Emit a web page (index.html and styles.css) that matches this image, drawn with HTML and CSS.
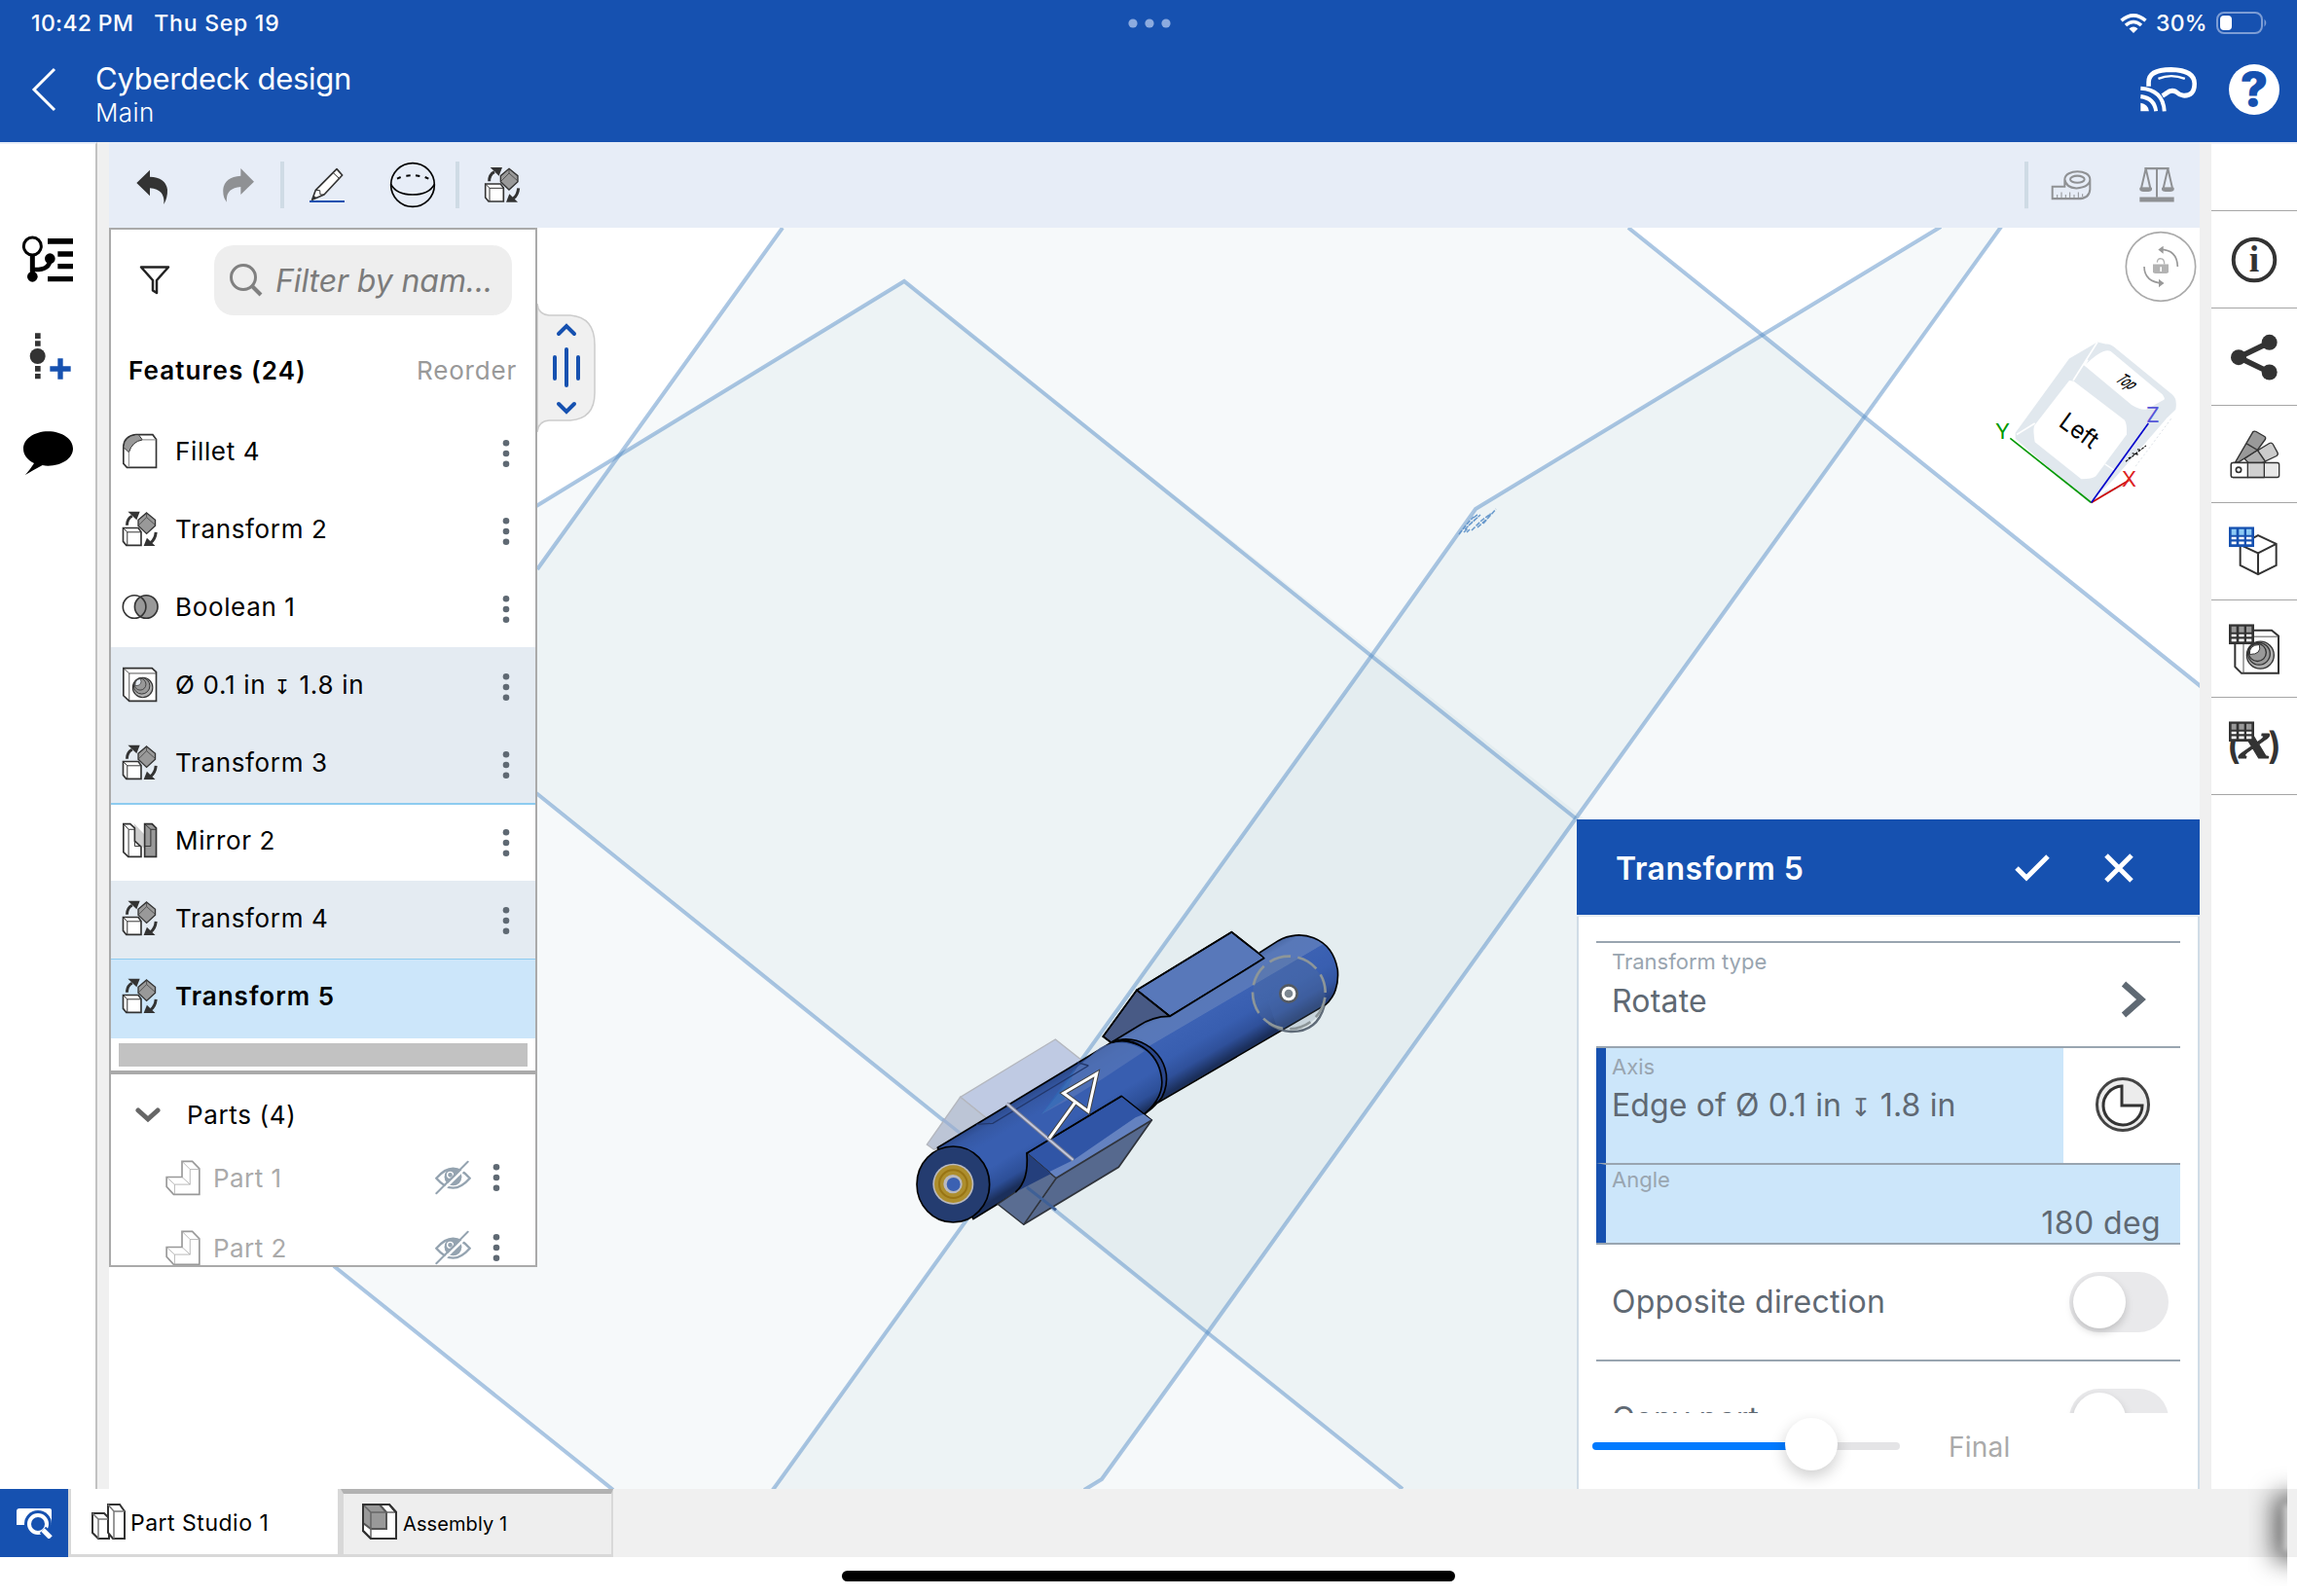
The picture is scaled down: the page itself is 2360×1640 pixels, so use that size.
FILE: index.html
```html
<!DOCTYPE html>
<html lang="en">
<head>
<meta charset="utf-8">
<title>Cyberdeck design</title>
<link rel="stylesheet" href="styles.css">
</head>
<body>
<svg class="defs" aria-hidden="true">
  <defs>
    <symbol id="transform" viewBox="76 280 114 112">
      <path d="M92 325Q92 304 108 296" fill="none" stroke="#333" stroke-width="9"/>
      <path d="M95 282H132L122 308Z" fill="#333"/>
      <path d="M182 346Q180 368 166 378" fill="none" stroke="#333" stroke-width="9"/>
      <path d="M180 389H144L154 364Z" fill="#333"/>
      <path d="M153 286L180 308V326L153 351L127 326V308Z" fill="#999" stroke="#333" stroke-width="4"/>
      <path d="M127 326L153 300L180 324M153 286V300" fill="none" stroke="#444" stroke-width="2.5"/>
      <path d="M80 333H127L136 345V387H90L80 375Z" fill="#fff" stroke="#333" stroke-width="5"/>
      <path d="M80 333L93 346V387M93 346H136" fill="none" stroke="#333" stroke-width="3"/>
    </symbol>
    <symbol id="fillet" viewBox="76 40 114 112">
      <path d="M120 45H172L183 60V147H92L81 135V85Q81 50 120 45Z" fill="#fff" stroke="#333" stroke-width="5"/>
      <path d="M120 45H128L140 61Q108 66 98 100L81 84Q84 50 120 45Z" fill="#999" stroke="#333" stroke-width="3"/>
      <path d="M98 100V145M140 61H182" stroke="#999" stroke-width="4" fill="none"/>
    </symbol>
    <symbol id="boolean" viewBox="74 536 116 80">
      <circle cx="151" cy="576" r="36" fill="#999"/>
      <circle cx="114" cy="576" r="36" fill="none" stroke="#333" stroke-width="5"/>
      <circle cx="151" cy="576" r="36" fill="none" stroke="#333" stroke-width="5"/>
    </symbol>
    <symbol id="hole" viewBox="76 760 114 112">
      <path d="M81 765H170L183 777V867H99L81 850Z" fill="#fff" stroke="#333" stroke-width="5"/>
      <path d="M81 765L99 781V867M99 781H183" fill="none" stroke="#333" stroke-width="2.5"/>
      <circle cx="141" cy="825" r="31" fill="#b0b0b0" stroke="#333" stroke-width="3.5"/>
      <circle cx="138" cy="820" r="25" fill="#999" stroke="#333" stroke-width="3"/>
      <circle cx="133" cy="815" r="18" fill="#999" stroke="#333" stroke-width="2.5"/>
      <path d="M118 820Q116 800 134 798Q142 818 118 820Z" fill="#e5ebf2" stroke="#333" stroke-width="2"/>
    </symbol>
    <symbol id="mirror" viewBox="76 1240 114 112">
      <path d="M114 1244L145 1276V1320L114 1295Z" fill="#ccc"/>
      <path d="M81 1245H102L116 1258V1298L136 1316V1347H96L81 1333Z" fill="#fff" stroke="#333" stroke-width="5"/>
      <path d="M81 1245L97 1262V1347M97 1262H116M116 1298V1314H136" stroke="#333" stroke-width="3" fill="none"/>
      <path d="M147 1245H170L183 1258V1347H147V1314Z" fill="#999" stroke="#333" stroke-width="5"/>
      <path d="M147 1245L166 1262V1314H147M166 1262H183" stroke="#333" stroke-width="3" fill="none"/>
    </symbol>
    <symbol id="part" viewBox="208 994 112 112">
      <path d="M261 998H293L315 1021V1101H235L213 1077V1047H261Z" fill="#fff" stroke="#999" stroke-width="5"/>
      <path d="M261 998L286 1023V1070H238V1101M286 1023H315M213 1047L238 1070M261 1047L286 1070" fill="none" stroke="#aaa" stroke-width="2.5"/>
    </symbol>
    <symbol id="hidden" viewBox="1042 996 112 108">
      <path d="M1046 1052Q1098 992 1150 1052Q1098 1112 1046 1052Z" fill="none" stroke="#94a3b0" stroke-width="7"/>
      <circle cx="1098" cy="1048" r="27" fill="#94a3b0"/>
      <circle cx="1089" cy="1042" r="9" fill="none" stroke="#fff" stroke-width="4"/>
      <path d="M1052 1103L1152 1005" stroke="#fff" stroke-width="8"/>
      <path d="M1046 1099L1144 1001" stroke="#94a3b0" stroke-width="6" stroke-linecap="round"/>
    </symbol>
    <symbol id="dots" viewBox="0 0 8 30">
      <circle cx="4" cy="4.3" r="3.3"/><circle cx="4" cy="15" r="3.3"/><circle cx="4" cy="25.7" r="3.3"/>
    </symbol>
    <symbol id="table" viewBox="270 712 78 63">
      <path d="M270 712H348V775H270Z"/>
      <path d="M278 720H293V738H278ZM301 720H317V738H301ZM324 720H340V738H324Z" class="table-head"/>
      <path d="M278 744H293V751H278ZM301 744H317V751H301ZM324 744H340V751H324ZM278 758H293V766H278ZM301 758H317V766H301ZM324 758H340V766H324Z" fill="#fff"/>
    </symbol>
    <linearGradient id="rear" gradientUnits="userSpaceOnUse" x1="890" y1="285" x2="1006" y2="483">
      <stop offset="0" stop-color="#4d6ca9"/><stop offset=".08" stop-color="#5878b8"/><stop offset=".32" stop-color="#5878ba"/>
      <stop offset=".33" stop-color="#3c62b4"/><stop offset=".6" stop-color="#385eb0"/><stop offset=".82" stop-color="#2f509a"/><stop offset="1" stop-color="#1b2f5b"/>
    </linearGradient>
    <linearGradient id="front" gradientUnits="userSpaceOnUse" x1="400" y1="585" x2="516" y2="783">
      <stop offset="0" stop-color="#2c4a8c"/><stop offset=".12" stop-color="#3558a4"/><stop offset=".3" stop-color="#385eb0"/>
      <stop offset=".6" stop-color="#385eb0"/><stop offset=".85" stop-color="#2d4f98"/><stop offset="1" stop-color="#1b2f5b"/>
    </linearGradient>
  </defs>
</svg>

<header class="header">
  <div class="status">
    <div class="status-left"><span class="time">10:42 PM</span><span class="date">Thu Sep 19</span></div>
    <svg class="multitask" viewBox="0 0 44 12"><circle cx="5" cy="6" r="4.6"/><circle cx="22" cy="6" r="4.6"/><circle cx="39" cy="6" r="4.6"/></svg>
    <div class="status-right">
      <svg width="28" height="20" viewBox="0 0 28 20" fill="none" stroke="#fff" stroke-width="3.6"><path d="M1.5 7.2Q14-3.400 26.500 7.200"/><path d="M6 12Q14 5 22 12"/><path d="M9.500 15.500Q14 11.500 18.500 15.500L14 20Z" fill="#fff" stroke="none"/></svg>
      <span class="charge">30%</span>
      <svg width="53" height="24" viewBox="0 0 53 24"><rect x="1" y="1" width="46" height="21" rx="7" fill="none" stroke="#7d9dd5" stroke-width="2"/><rect x="4" y="4" width="12" height="15" rx="4" fill="#fff"/><path d="M49.500 7.500Q53 11.500 49.500 15.500Z" fill="#7d9dd5"/></svg>
    </div>
  </div>
  <div class="titlebar">
    <svg class="back" width="26" height="46" viewBox="0 0 26 46"><path d="M24 2L3 23L24 44" fill="none" stroke="#fff" stroke-width="3"/></svg>
    <div class="titles"><div class="doc-title">Cyberdeck design</div><div class="doc-branch">Main</div></div>
    <svg class="headset" viewBox="716 192 176 131" preserveAspectRatio="none" fill="none" stroke="#fff">
      <path d="M742 248V236Q742 199 812 199Q885 201 885 240Q885 277 850 275Q837 273 827 264Q812 256 798 268L785 276" stroke-width="14"/>
      <path d="M772 226Q812 210 855 226" stroke-width="7"/>
      <path d="M717 254Q787 258 791 321M717 278Q760 283 765 321" stroke-width="12"/><path d="M717 297Q740 300 743 321H717Z" fill="#fff" stroke="none"/>
    </svg>
    <div class="help">?</div>
  </div>
</header>

<main class="workspace">
  <nav class="rail-left">
    <svg viewBox="0 0 300 210"><g fill="none" stroke="#000"><circle cx="100" cy="69" r="27" stroke-width="9"/><path d="M100 98V160" stroke-width="15"/><path d="M104 141Q155 143 154 108" stroke-width="14"/></g><circle cx="100" cy="163" r="16"/><circle cx="154" cy="107" r="16"/><path d="M147 45H225V62H147ZM178 85H225V101H178ZM178 123H225V139H178ZM147 162H225V178H147Z"/></svg>
    <svg viewBox="0 300 300 210"><path d="M108 337H125V354H108ZM108 361H125V377H108ZM108 438H125V455H108ZM108 462H125V478H108Z" fill="#333"/><circle cx="116" cy="408" r="24" fill="#333"/><path d="M154 447H218M186 415V479" stroke="#1651b0" stroke-width="16"/></svg>
    <svg viewBox="0 600 300 210"><path d="M148 640C192 640 225 664 225 693S192 746 148 746C142 746 136 745 131 744Q108 756 78 774Q94 756 105 738C85 728 72 713 72 693C72 664 105 640 148 640Z"/></svg>
  </nav>
  <div class="gutter"></div>
  <section class="stage">
    <div class="toolbar">
      <svg viewBox="0 0 1290 240" class="tools" fill="none">
        <path d="M61 114L102 74V95Q150 96 156 134Q157 158 145 180Q150 134 102 130V154Z" fill="#333"/>
        <path d="M423 110L382 69V92Q332 96 328 133Q326 158 339 173Q334 130 382 126V150Z" fill="#8f9194"/>
        <path d="M504 48H516V192H504ZM1044 48H1056V192H1044Z" fill="#cfdbe5"/>
        <path d="M678 71L695 90L639 150L602 166L613 136Z" fill="#fff" stroke="#333" stroke-width="5" stroke-linejoin="round"/>
        <path d="M613 136L626 137L627 150L639 150M666 82L685 100" stroke="#333" stroke-width="3"/><path d="M602 166L607 152L616 160Z" fill="#333"/>
        <path d="M594 171H702" stroke="#1651b0" stroke-width="6"/>
        <circle cx="912" cy="120" r="67" stroke="#000" stroke-width="5"/><path d="M845 118Q862 150 912 150T979 118" stroke="#000" stroke-width="5"/>
        <path d="M864 101L875 96M892 92L905 91M921 91L934 93M950 96L961 101" stroke="#000" stroke-width="6"/>
        <use href="#transform" x="1132" y="64" width="114" height="112"/>
      </svg>
      <svg viewBox="360 448 480 160" preserveAspectRatio="none" class="measures" fill="none" stroke="#8f9194" stroke-width="5">
        <path d="M360 465H372V600H360Z" fill="#cfdbe5" stroke="none"/>
        <path d="M446 537H484V516C486 486 561 486 562 516V545Q560 572 525 572H446ZM484 516Q488 540 520 542Q562 538 562 516" stroke-width="6"/><ellipse cx="523" cy="516" rx="22" ry="10" stroke-width="6"/>
        <path d="M461 572V560M474 572V553M487 572V560M500 572V553M513 572V560M526 572V553M539 566V558" stroke-width="3"/>
        <path d="M730 485H806M768 485V568M734 485L720 542H748L734 485M802 485L788 542H816L802 485" stroke-width="6"/><path d="M715 540H753V547Q750 552 742 552H726Q718 552 715 547ZM783 540H821V547Q818 552 810 552H794Q786 552 783 547ZM715 567H821V581H715Z" fill="#8f9194" stroke="none"/>
      </svg>
    </div>
    <div class="canvas">
      <svg class="scene" viewBox="112 234 2148 1296">
        <g class="planes">
          <path d="M804 234L340 880L112 1200L552 815L1240 1370L1441 1530H2260V706L1673 234Z"/>
          <path d="M929 289L552 519L112 780V1120L345 1303L629 1530H2260V1341Z"/>
          <path d="M1516 523L1811 344L1994 234H2056L1619 841L1241 1369L1132 1520L1114 1530H794L1409 674Z"/>
          <g class="edges">
            <path d="M804 234L552 585M551 815L1240 1369L1441 1530M1673 234L2262 706"/>
            <path d="M551 520L929 289L1409 674L1619 841M343 1301L630 1531"/>
            <path d="M794 1531L1409 674L1516 523L1811 344L1994 233M2056 233L1619 841L1241 1369L1132 1520L1114 1531"/>
          </g>
          <path class="plane-label" d="M1499 549l7-9 8-9M1505 544l8-8 6-5M1509 540l12-11M1512 545l10-10 8-6M1518 542l10-9M1524 538l6-7 7-8M1529 532l3-5M1507 547l3-3M1514 532l5-4M1504 547l4-4"/>
        </g>
        <g class="model" transform="translate(920 930) scale(.33333)">
          <path d="M493 414L595 495L300 673L200 592Z" fill="#bfcae3" stroke="#b4b7be" stroke-width="4"/>
          <path d="M200 592L300 673L150 750L118 753L97 738Z" fill="#bcc5d6" stroke="#b4b7be" stroke-width="4"/>
          <path d="M145 660L200 704" stroke="#9fb4d3" stroke-width="10"/>
          <path d="M1036 83L1138 163L846 343L744 262Z" fill="#5878ba"/>
          <path d="M744 262L846 343L665 424L640 405Z" fill="#485a85"/>
          <path d="M1138 163L1036 83L744 262L640 405L665 424M744 262L846 343" fill="none"/>
          <path d="M665 424L750 372Q795 342 846 343L1138 163L1122 147L1180 110C1245 72 1345 95 1363 200Q1369 270 1325 308L800 612Z" fill="url(#rear)" stroke="none"/>
          <path d="M1310 125Q1368 170 1363 230Q1355 290 1310 318L1180 390L1150 300L1200 192Z" fill="#3b61b2" stroke="none" opacity=".35"/>
          <path d="M665 424L750 372Q795 342 846 343L1138 163M1122 147L1180 110C1245 72 1345 95 1363 200Q1369 270 1325 308L800 614" fill="none"/>
          <path d="M130 748L665 424C740 400 840 470 830 560Q820 610 770 642L240 968Z" fill="url(#front)"/>
          <path d="M630 440Q700 405 768 450L640 535L550 590L450 645Q500 590 560 500Z" fill="#5676b8" stroke="none" opacity=".75"/>
          <path d="M555 500L450 645L520 600Z" fill="#2f6ab8" stroke="none" opacity=".6"/>
          <path d="M665 424C745 385 850 460 834 555Q826 600 800 614L770 642Q830 590 820 530C808 450 730 400 665 424Z" fill="#2a468a"/>
          <path d="M595 495L300 673L250 676M560 485L595 495" fill="none" stroke="#22376b" stroke-width="4"/>
          <ellipse cx="178" cy="861" rx="112" ry="117" fill="#243c70" stroke-width="5"/>
          <circle cx="178" cy="860" r="63" fill="#b9b9bf" stroke="none"/><circle cx="178" cy="860" r="58" fill="#ad8e2d" stroke="none"/><circle cx="178" cy="860" r="43" fill="none" stroke="#987414" stroke-width="6"/>
          <circle cx="177" cy="860" r="29" fill="#b9b9bf" stroke="none"/><circle cx="179" cy="861" r="21" fill="#3b61b2" stroke="none"/>
          <path d="M697 589L790 663L495 842L405 765Z" fill="#3055a6" stroke-width="4"/>
          <path d="M740 655L765 645L790 663L495 842L475 822L550 785Z" fill="#6482c0" stroke="none"/>
          <path d="M790 663L688 808L395 985L495 842Z" fill="#56698e" stroke="#30343c"/>
          <path d="M405 765L495 842L395 985L315 922L370 885Q412 850 405 765Z" fill="#5a6d92" stroke="#30343c" stroke-width="4"/>
          <path d="M405 765L480 828L380 880Q412 840 405 765Z" fill="#243f7c" stroke="none"/>
          <path d="M405 870L495 940" stroke="#3f6096" stroke-width="9"/>
          <path d="M697 589L405 765Q412 850 370 885" fill="none"/>
          <path d="M343 612L548 786" stroke="#777c90" stroke-width="12"/><path d="M343 612L548 786" stroke="#c4c8dc" stroke-width="6"/>
          <g fill="none" stroke-linejoin="miter"><path d="M474 720L556 606M620 520L518 580L594 636Z" stroke="#444" stroke-width="15"/><path d="M474 720L556 606M620 520L518 580L594 636Z" stroke="#fff" stroke-width="9"/></g>
          <circle cx="1213" cy="273" r="112" fill="#667991" fill-opacity=".22" stroke="none"/>
          <path d="M1322 310Q1300 392 1218 390Q1185 388 1150 365" fill="none" stroke="#5f6b78" stroke-width="7"/>
          <circle cx="1213" cy="270" r="112" fill="none" stroke="#8d9699" stroke-width="8" stroke-dasharray="68 22" pathLength="704" stroke-dashoffset="-15"/>
          <circle cx="1212" cy="273" r="30" fill="#555b63" stroke="none"/><circle cx="1212" cy="273" r="22" fill="#fff" stroke="none"/><circle cx="1212" cy="273" r="13" fill="#7c8791" stroke="none"/>
        </g>
        <g transform="translate(1960 0) scale(.33333 .35714)" class="viewcube">
          <ellipse cx="780" cy="767" rx="107" ry="99" fill="#fff" stroke="#aaa" stroke-width="5"/>
          <path d="M778 718Q830 718 832 767M787 815Q730 812 729 767" fill="none" stroke="#999" stroke-width="5"/><path d="M788 708L772 718L788 730ZM774 803L790 815L774 827Z" fill="#999"/>
          <path d="M756 760H804V782Q804 787 797 787H763Q756 787 756 782Z" fill="#b3b3b3"/><path d="M769 755Q770 743 780 744Q791 744 791 760" fill="none" stroke="#b3b3b3" stroke-width="4"/><path d="M778 768H783V781H778Z" fill="#fff"/>
          <path d="M332 1245L498 1032L585 984L610 990Q625 988 645 1005L815 1135Q832 1148 826 1178L800 1202L690 1330L560 1447L332 1262Z" fill="#e1e8ee"/>
          <path d="M800 1202L620 1395L566 1447L735 1370L805 1210Z" fill="#fff"/>
          <path d="M545 1052Q600 1000 625 1010L785 1135Q795 1148 790 1150L735 1178Q715 1180 690 1165Z" fill="#fff"/>
          <path d="M336 1250L392 1218M585 984L510 1095M555 1035L545 1052" stroke="#fff" stroke-width="5"/>
          <path d="M498 1095L512 1097L668 1208Q676 1215 675 1250L580 1370Q570 1378 535 1378L392 1272Q386 1240 390 1225Z" fill="#fff"/>
          <path d="M608 1335L640 1355M735 1370L700 1385L610 1410L570 1444Z" stroke="#fff" stroke-width="4" fill="#e1e8ee"/>
          <path d="M812 1205L700 1345" stroke="#ccd3da" stroke-width="2" stroke-dasharray="6 7"/>
          <path d="M672 1328L735 1282M680 1318l14-4M692 1304l18 4M708 1293l12 2" stroke="#000" stroke-width="3" stroke-dasharray="9 3"/>
          <path d="M316 1261L566 1446" stroke="#090" stroke-width="5"/><path d="M566 1446L682 1382" stroke="#c00" stroke-width="5"/><path d="M566 1446L742 1218" stroke="#00c" stroke-width="5"/>
        </g>
        <g class="cube-text">
          <text x="2050" y="451" fill="#090">Y</text><text x="2205" y="434" fill="#5656d8">Z</text><text x="2180" y="500" fill="#d22">X</text>
          <text class="left" transform="translate(2114 437) rotate(36) scale(.94 1)">Left</text>
          <text class="top" transform="matrix(.5 .3 -.9 .55 2172 391)">Top</text>
        </g>
      </svg>

      <svg class="handle" viewBox="0 0 62 132"><path d="M0 0Q1 11 12 12H34Q59 14 59 42V92Q59 118 34 120H12Q1 121 0 132Z" fill="#f0f0f0" stroke="#ccc" stroke-width="1.500"/><g fill="none" stroke="#1651b0" stroke-width="4" stroke-linecap="round"><path d="M22 31L30 23L38 31M22 103L30 111L38 103M30 47V84M18 55V77M42 55V77"/></g></svg>

      <aside class="tree">
        <div class="filter-row">
          <svg width="32" height="31" viewBox="0 0 32 31"><path d="M2 1.500H30L18 15V28L14 25.500V15Z" fill="none" stroke="#222" stroke-width="2.500" stroke-linejoin="round"/></svg>
          <div class="search"><svg width="34" height="34" viewBox="0 0 34 34" fill="none" stroke="#808080"><circle cx="14" cy="14" r="12.500" stroke-width="3"/><path d="M22 22L32 32" stroke-width="4"/></svg><span class="placeholder">Filter by nam...</span></div>
        </div>
        <div class="features-head"><span class="features-title">Features (24)</span><span class="reorder">Reorder</span></div>
        <ul class="features">
          <li><svg class="ico"><use href="#fillet"/></svg><span>Fillet 4</span><svg class="dots"><use href="#dots"/></svg></li>
          <li><svg class="ico"><use href="#transform"/></svg><span>Transform 2</span><svg class="dots"><use href="#dots"/></svg></li>
          <li><svg class="ico"><use href="#boolean"/></svg><span>Boolean 1</span><svg class="dots"><use href="#dots"/></svg></li>
          <li class="linked"><svg class="ico"><use href="#hole"/></svg><span class="hole-name">Ø 0.1 in <i class="depth">↧</i> 1.8 in</span><svg class="dots"><use href="#dots"/></svg></li>
          <li class="linked last"><svg class="ico"><use href="#transform"/></svg><span>Transform 3</span><svg class="dots"><use href="#dots"/></svg></li>
          <li><svg class="ico"><use href="#mirror"/></svg><span>Mirror 2</span><svg class="dots"><use href="#dots"/></svg></li>
          <li class="linked before-active"><svg class="ico"><use href="#transform"/></svg><span>Transform 4</span><svg class="dots"><use href="#dots"/></svg></li>
          <li class="active"><svg class="ico"><use href="#transform"/></svg><span>Transform 5</span></li>
        </ul>
        <div class="rollback"></div>
        <div class="parts">
          <div class="parts-head"><svg width="26" height="16" viewBox="0 0 26 16"><path d="M3 3L13 12L23 3" fill="none" stroke="#666" stroke-width="5" stroke-linecap="round"/></svg><span>Parts (4)</span></div>
          <div class="part"><svg class="ico"><use href="#part"/></svg><span>Part 1</span><svg class="eye"><use href="#hidden"/></svg><svg class="dots"><use href="#dots"/></svg></div>
          <div class="part"><svg class="ico"><use href="#part"/></svg><span>Part 2</span><svg class="eye"><use href="#hidden"/></svg><svg class="dots"><use href="#dots"/></svg></div>
        </div>
      </aside>

      <section class="dialog">
        <div class="dialog-head"><h2>Transform 5</h2>
          <svg width="36" height="28" viewBox="0 0 36 28"><path d="M2 14L12 24L34 2" fill="none" stroke="#fff" stroke-width="5"/></svg>
          <svg width="30" height="30" viewBox="0 0 30 30"><path d="M2 2L28 28M28 2L2 28" stroke="#fff" stroke-width="5"/></svg>
        </div>
        <div class="dialog-body">
          <div class="field type"><div><label>Transform type</label><b>Rotate</b></div><svg width="26" height="38" viewBox="0 0 26 38"><path d="M3 3L21 19L3 35" fill="none" stroke="#5f6973" stroke-width="6.500"/></svg></div>
          <div class="field axis"><div class="selected"><label>Axis</label><b class="edge">Edge of Ø 0.1 in <i class="depth">↧</i> 1.8 in</b></div>
            <svg width="58" height="58" viewBox="0 0 58 58"><circle cx="29" cy="29" r="26.500" fill="#ececec" stroke="#444" stroke-width="3"/><path d="M28 10V30H49A20 20 0 1 1 28 10Z" fill="#fff" stroke="#333" stroke-width="3"/></svg></div>
          <div class="field angle"><label>Angle</label><b>180 deg</b></div>
          <div class="field switch"><b>Opposite direction</b><span class="toggle"></span></div>
          <div class="field switch cut"><b>Copy part</b><span class="toggle"></span></div>
        </div>
        <div class="dialog-foot"><div class="slider"><span class="thumb"></span></div><span class="final">Final</span></div>
      </section>
    </div>
  </section>
  <div class="gutter"></div>
  <nav class="rail-right">
    <div class="blank"></div>
    <div><svg viewBox="0 0 88 100"><circle cx="44" cy="50.500" r="21.500" fill="#fff" stroke="#333" stroke-width="4"/><text x="44" y="63" class="info">i</text></svg></div>
    <div><svg viewBox="216 48 264 296"><path d="M395 152L300 198L395 244" fill="none" stroke="#333" stroke-width="17"/><g fill="#333"><circle cx="395" cy="152" r="24"/><circle cx="300" cy="198" r="24"/><circle cx="395" cy="244" r="24"/></g></svg></div>
    <div><svg viewBox="216 344 264 296" stroke="#333" stroke-width="4" stroke-linejoin="round"><path d="M318 506L395 459Q402 456 406 462L420 488Q423 494 417 498L350 530Z" fill="#ccc"/><path d="M318 506L358 480L383 516L340 530Z" fill="#b0b0b0"/><path d="M290 517L344 424Q348 420 354 423L380 438Q385 441 382 447L358 480L300 517Z" fill="#999"/><path d="M325 460L358 480" fill="none"/><rect x="277" y="519" width="148" height="45" rx="6" fill="#e8e8e8"/><path d="M328 519H379V564H328Z" fill="#d0d0d0"/><path d="M328 519V564H283Q277 564 277 558V525Q277 519 283 519Z" fill="#fff"/><circle cx="300" cy="541" r="8" fill="#fff" stroke-width="5"/></svg></div>
    <div><svg viewBox="216 640 264 296"><path d="M360 739L416 765V831L360 859L305 831V768ZM305 768L360 794L416 765M360 794V859" fill="none" stroke="#333" stroke-width="6"/><g fill="#1651b0" color="#8dcbf5"><use href="#table" x="270" y="712" width="78" height="63"/></g></svg></div>
    <div><svg viewBox="216 936 264 296"><path d="M289 1028H402L423 1045V1160H309L289 1140Z" fill="#fff" stroke="#333" stroke-width="6"/><path d="M315 1047V1160M315 1047H423" stroke="#555" stroke-width="3" fill="none"/><g stroke="#333" stroke-width="4" fill="#999"><circle cx="367" cy="1104" r="42" fill="#b0b0b0"/><circle cx="363" cy="1100" r="34"/><circle cx="358" cy="1096" r="27"/><path d="M334 1102Q332 1072 364 1072Q372 1102 334 1102Z" fill="#fff" stroke-width="3"/></g><g fill="#333" color="#999"><use href="#table" x="270" y="1008" width="78" height="63"/></g></svg></div>
    <div><svg viewBox="216 1232 264 296"><text x="263" y="1421" class="paren">(</text><text transform="translate(302 1418) scale(1.180 1)" class="var">x</text><text x="390" y="1421" class="paren">)</text><g fill="#333" color="#999"><use href="#table" x="270" y="1304" width="78" height="63"/></g></svg></div>
  </nav>
</main>

<footer class="tabs">
  <div class="tab-search"><svg width="38" height="32" viewBox="0 0 38 32"><path d="M4 1H35Q37 1 37 3V18H1V4Q1 1 4 1Z" fill="#fff"/><circle cx="23" cy="17" r="14" fill="#1651b0"/><circle cx="23" cy="17" r="9" fill="none" stroke="#fff" stroke-width="4"/><path d="M28 23L36 31" stroke="#1651b0" stroke-width="9"/><path d="M28 23L36 31" stroke="#fff" stroke-width="5"/></svg></div>
  <div class="tab current"><svg width="35" height="38" viewBox="0 0 35 38" fill="#fff" stroke="#333" stroke-width="2"><path d="M1 10H13L18 15V36H7L1 30Z"/><path d="M17 1H29L34 8V36H22L17 30Z"/><path d="M1 10L7 16V36M7 16H17M17 1L23 8V36M23 8H34" stroke="#777" stroke-width="1.500" fill="none"/></svg><span>Part Studio 1</span></div>
  <div class="tab other"><svg width="36" height="38" viewBox="0 0 36 38" stroke="#333" stroke-width="2"><path d="M1 1H28L35 9V36H9L1 28Z" fill="#fff"/><path d="M1 1H18L25 9V26H9L1 20Z" fill="#999" stroke="#555"/><path d="M1 1L9 9V36M9 9H35" fill="none" stroke="#666" stroke-width="1.500"/><path d="M1 1H28L35 9V36H9L1 28Z" fill="none"/></svg><span>Assembly 1</span></div>
  <div class="tab-fill"><div class="edge-clip"><span class="edge-shadow"></span></div></div>
</footer>
<div class="home"><span></span></div>
</body>
</html>
```

FILE: styles.css
```css
* { box-sizing: border-box; }
body { margin: 0; width: 2360px; height: 1640px; overflow: hidden; background: #fff; color: #000; font-family: Inter, "Noto Sans", sans-serif; font-size: 26px; display: grid; grid-template-rows: 146px 1384px 70px 40px; }
svg { display: block; flex: none; }
span, b, label { white-space: nowrap; }
.defs { position: absolute; width: 0; height: 0; }

.header { background: #1651b0; color: #fff; }
.status { height: 48px; display: grid; grid-template-columns: 1fr 44px 1fr; align-items: center; padding: 0 30px 0 32px; }
.status-left, .status-right { display: flex; align-items: center; font-size: 23px; font-weight: 500; }
.status-left { gap: 21px; }
.time { letter-spacing: .35px; }
.date { letter-spacing: .75px; }
.status-right { justify-content: flex-end; gap: 9px; }
.charge { letter-spacing: .3px; }
.multitask { width: 44px; height: 12px; fill: #8cabdf; }
.titlebar { height: 98px; display: flex; align-items: center; padding: 0 18px 10px 32px; }
.titles { flex: 1; margin-left: 40px; padding-top: 10px; }
.doc-title { font-size: 31px; line-height: 38px; letter-spacing: -.25px; }
.doc-branch { font-size: 26px; line-height: 32px; font-weight: 300; letter-spacing: .4px; }
.headset { width: 58px; height: 46px; margin-right: 33px; }
.help { width: 52px; height: 52px; border-radius: 50%; background: #fff; color: #1651b0; font-size: 48px; line-height: 52px; font-weight: 900; text-align: center; }

.workspace { display: grid; grid-template-columns: 100px 12px 2148px 12px 88px; }
.rail-left { border-right: 2px solid #c2c2c2; border-top: 2px solid #e7edf8; padding-top: 82px; display: flex; flex-direction: column; gap: 30px; }
.rail-left svg { width: 100px; height: 70px; }
.gutter { background: #f0f0f0; }
.rail-right { border-top: 2px solid #eef0f8; }
.rail-right div { height: 100px; border-bottom: 1px solid #a6a6a6; }
.rail-right .blank { height: 69px; }
.rail-right svg { width: 88px; height: 99px; }
.table-head { fill: currentColor; }
.info { font: bold 38px "Liberation Serif", serif; text-anchor: middle; fill: #333; }
.paren { font: 600 114px Inter, sans-serif; fill: #333; }
.var { font: italic bold 165px "Liberation Serif", serif; fill: #333; stroke: #333; stroke-width: 3; }

.stage { display: grid; grid-template-rows: 88px 1296px; }
.toolbar { background: #e7edf7; display: flex; justify-content: space-between; align-items: flex-start; padding: 4px 20px 0 8px; }
.tools { width: 430px; height: 80px; }
.measures { width: 160px; height: 57px; margin-top: 10px; }
.canvas { position: relative; overflow: hidden; }
.scene { width: 2148px; height: 1296px; }
.planes path { fill: rgb(55, 125, 145); fill-opacity: .046; }
.planes .edges path, .planes .plane-label { fill: none; stroke: #5a8fc8; stroke-opacity: .5; stroke-width: 4; }
.planes .plane-label { stroke-width: 1.5; stroke-opacity: .9; stroke-dasharray: 5 1.5; }
.model { stroke: #000; stroke-width: 5; }
.cube-text { font-size: 22px; }
.cube-text .left { font-size: 25px; }
.cube-text .top { font-size: 18px; font-weight: 500; }
.handle { position: absolute; left: 440px; top: 78px; width: 62px; height: 132px; }

.tree { position: absolute; left: 0; top: 0; width: 440px; height: 1068px; border: 2px solid #aaa; background: #fff; overflow: hidden; letter-spacing: .65px; }
.filter-row { display: flex; align-items: center; height: 104px; padding: 0 24px 0 29px; gap: 45px; }
.search { width: 306px; height: 72px; border-radius: 20px; background: #eee; display: flex; align-items: center; gap: 13px; padding-left: 16px; color: #7b7b7b; font-style: italic; font-size: 32px; letter-spacing: -.1px; }
.features-head { display: flex; justify-content: space-between; align-items: center; height: 80px; padding: 0 19px 0 18px; }
.features-title { font-weight: 600; letter-spacing: 1.1px; }
.reorder { color: #999; letter-spacing: .8px; }
.features { list-style: none; margin: 5px 0 0; padding: 0; }
.features li { display: flex; align-items: center; height: 80px; padding: 0 26px 4px 11px; position: relative; }
.features li span { flex: 1; margin-left: 17px; }
.ico { width: 38px; height: 37px; }
.dots { width: 8px; height: 30px; fill: #5f6973; margin-top: 6px; }
.depth { display: inline-block; font-family: "DejaVu Sans", sans-serif; font-style: normal; font-size: .8em; line-height: 1; }
.features .linked { background: #e4ebf2; box-shadow: 0 1px #b2cee8; z-index: 1; }
.features .linked.last { box-shadow: 0 2px #8dcbf0; }
.features .linked.before-active { box-shadow: 0 1px #8dcbf0; }
.features .active { background: #cce6fa; font-weight: 600; height: 82px; padding-bottom: 6px; letter-spacing: 1px; }
.features .hole-name { letter-spacing: .7px; }
.rollback { height: 24px; margin: 5px 8px 4px; background: #c2c2c2; }
.parts { border-top: 4px solid #aaa; }
.parts-head { height: 70px; padding: 13px 25px 0; display: flex; align-items: center; gap: 27px; }
.part { height: 72px; display: flex; align-items: center; padding: 0 36px 0 55px; color: #aaa; letter-spacing: .45px; }
.part span { flex: 1; margin-left: 12px; }
.part .dots { margin: 0 0 0 22px; }
.eye { width: 37px; height: 36px; }

.dialog { position: absolute; left: 1508px; top: 608px; width: 640px; height: 688px; background: #fff; display: grid; grid-template-rows: 100px 510px 78px; }
.dialog-head { background: #1651b0; border-bottom: 2px solid #e4ebf2; background-clip: padding-box; color: #fff; display: flex; align-items: center; padding: 2px 68px 0 40px; }
.dialog-head h2 { margin: 0; flex: 1; font-size: 32px; font-weight: 600; letter-spacing: .45px; }
.dialog-head svg + svg { margin-left: 56px; }
.dialog-body, .dialog-foot { border: solid #d0dce6; border-width: 0 2px; }
.dialog-body { padding: 25px 18px 0; overflow: hidden; }
.field { border-top: 2px solid #99a5b0; display: flex; }
.field label { display: block; color: #99a5b0; font-size: 22px; line-height: 28px; }
.field b { font-weight: 400; font-size: 32px; line-height: 40px; color: #5f6973; letter-spacing: .2px; }
.type { height: 108px; align-items: center; justify-content: space-between; padding: 0 35px 0 16px; }
.type > div { margin-top: -21px; }
.type b { display: block; margin-top: 7px; }
.type svg { margin-top: 10px; }
.axis { height: 120px; align-items: center; justify-content: space-between; padding-right: 30px; }
.axis svg { margin-top: -2px; }
.selected { width: 480px; height: 118px; background: #cce6fa; border-left: 10px solid #1651b0; padding: 5px 0 0 6px; }
.selected b { display: block; margin-top: 6px; letter-spacing: .12px; }
.angle { height: 82px; background: #cce6fa; border-left: 10px solid #1651b0; justify-content: space-between; padding: 1px 20px 0 6px; }
.angle b { align-self: flex-end; letter-spacing: .4px; }
.switch { height: 120px; align-items: center; justify-content: space-between; padding: 0 12px 0 16px; }
.toggle { width: 102px; height: 62px; border-radius: 31px; background: #e9e9eb; padding: 4px; }
.toggle::before { content: ""; display: block; width: 54px; height: 54px; border-radius: 50%; background: #fff; box-shadow: 0 4px 8px rgba(0, 0, 0, .18); }
.dialog-foot { display: flex; padding: 0 0 0 14px; }
.slider { width: 316px; height: 8px; margin-top: 30px; border-radius: 4px; background: linear-gradient(90deg, #007aff 215px, #e4e4e6 215px); }
.thumb { display: block; width: 54px; height: 54px; margin: -25px 0 0 198px; border-radius: 50%; background: #fff; box-shadow: 0 6px 16px rgba(0, 0, 0, .2); }
.final { margin: 18px 0 0 50px; color: #aaa; font-size: 28px; letter-spacing: .2px; }

.tabs { display: grid; grid-template-columns: 70px 280px 280px 1fr; background: #f0f0f0; }
.tab-search { background: #1651b0; display: grid; place-items: center; }
.tab { display: flex; align-items: center; border: solid #d8d8d8; border-width: 0 2px 3px 3px; }
.tab span { padding-top: 3px; }
.current { background: #fff; padding-left: 21px; gap: 5px; font-size: 23px; letter-spacing: .5px; border-right-width: 3px; }
.other { background: #eee; border-top: 5px solid #b2b2b2; padding: 0 0 4px 19px; gap: 6px; font-size: 20px; letter-spacing: .1px; }
.edge-clip { position: absolute; left: 2310px; top: 1500px; width: 40px; height: 130px; overflow: hidden; }
.edge-shadow { position: absolute; left: 36px; top: 46px; width: 20px; height: 48px; box-shadow: 0 0 24px 10px rgba(0, 0, 0, .6); background: rgba(0, 0, 0, .15); filter: blur(3px); }
.home { display: flex; justify-content: center; padding-top: 14px; }
.home span { width: 630px; height: 11px; border-radius: 6px; background: #000; }
```
